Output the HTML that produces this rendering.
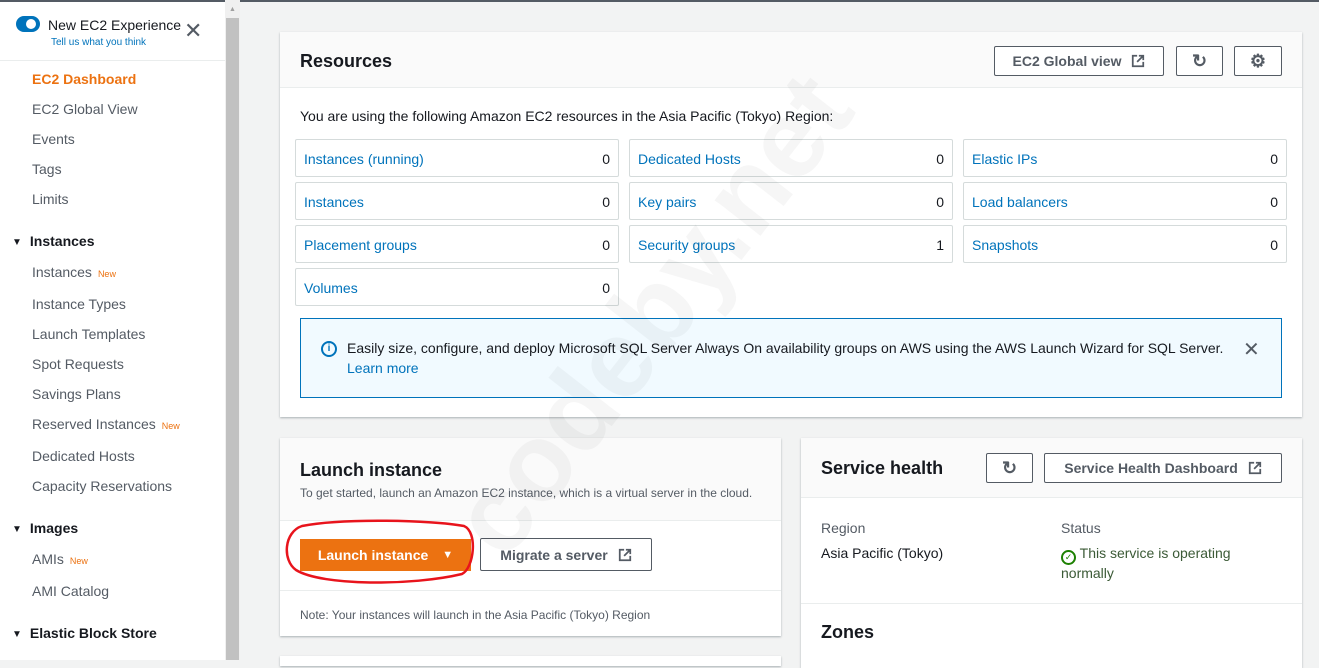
<!DOCTYPE html><html><head><style>
*{box-sizing:border-box;margin:0;padding:0}
body{width:1319px;height:660px;overflow:hidden;background:#f2f3f3;font-family:"Liberation Sans",sans-serif;color:#16191f;position:relative;font-size:14px}
.a{position:absolute}
.side{left:0;top:0;width:225px;height:660px;background:#fff;border-top:2px solid #545b64}
.sb{left:225px;top:0;width:15px;height:660px;background:#f0f0f0}
.nav{position:absolute;left:32px;color:#545b64;font-size:14px}
.grp{position:absolute;left:12px;font-weight:bold;font-size:14px;color:#16191f}
.grp:before{content:"▼";font-size:10px;margin-right:8px;position:relative;top:-1px}
.new{color:#ec7211;font-size:9px;margin-left:6px}
.card{background:#fff;box-shadow:0 1px 2px rgba(0,28,36,.3)}
.btn{position:absolute;border:1px solid #545b64;background:#fff;font-weight:bold;color:#545b64;font-size:14px;display:flex;align-items:center;justify-content:center;gap:10px;border-radius:2px}
.cell{position:absolute;width:324px;height:38px;border:1px solid #d5dbdb;border-radius:2px;color:#0073bb;padding:11px 8px;font-size:14px}
.cell span{position:absolute;right:8px;color:#16191f}
</style></head><body>
<svg width="0" height="0" style="position:absolute"><defs><symbol id="ext" viewBox="0 0 16 16"><path d="M7 2H2v12h12V9M9 2h5v5M14 2L7 9" fill="none" stroke="currentColor" stroke-width="2"/></symbol></defs></svg>
<div class="a" style="left:0;top:0;width:1319px;height:2px;background:#545b64"></div>
<div class="a side">
 <div class="a" style="left:16px;top:14px;width:24px;height:16px;border-radius:8px;background:#0073bb"><div class="a" style="left:10px;top:3px;width:10px;height:10px;border-radius:5px;background:#fff"></div></div>
 <div class="a" style="left:48px;top:15px;font-size:14px">New EC2 Experience</div>
 <div class="a" style="left:51px;top:35px;font-size:10px;color:#0073bb">Tell us what you think</div>
 <div class="a" style="left:184px;top:16px;font-size:22px;color:#545b64">✕</div>
 <div class="a" style="left:0;top:58px;width:225px;height:1px;background:#eaeded"></div>
 <div class="nav" style="top:69px;color:#ec7211;font-weight:bold">EC2 Dashboard</div>
 <div class="nav" style="top:99px">EC2 Global View</div>
 <div class="nav" style="top:129px">Events</div>
 <div class="nav" style="top:159px">Tags</div>
 <div class="nav" style="top:189px">Limits</div>
 <div class="grp" style="top:231px">Instances</div>
 <div class="nav" style="top:262px">Instances<span class="new">New</span></div>
 <div class="nav" style="top:294px">Instance Types</div>
 <div class="nav" style="top:324px">Launch Templates</div>
 <div class="nav" style="top:354px">Spot Requests</div>
 <div class="nav" style="top:384px">Savings Plans</div>
 <div class="nav" style="top:414px">Reserved Instances<span class="new">New</span></div>
 <div class="nav" style="top:446px">Dedicated Hosts</div>
 <div class="nav" style="top:476px">Capacity Reservations</div>
 <div class="grp" style="top:518px">Images</div>
 <div class="nav" style="top:549px">AMIs<span class="new">New</span></div>
 <div class="nav" style="top:581px">AMI Catalog</div>
 <div class="grp" style="top:623px">Elastic Block Store</div>
</div>
<div class="a sb"><div class="a" style="left:1px;top:18px;width:13px;height:642px;background:#c1c1c1"></div><div class="a" style="left:4px;top:6px;font-size:7px;color:#a0a0a0">▲</div></div>

<div class="a card" style="left:280px;top:32px;width:1022px;height:385px">
 <div class="a" style="left:0;top:0;width:1022px;height:56px;background:#fafafa;border-bottom:1px solid #eaeded"></div>
 <div class="a" style="left:20px;top:19px;font-size:18px;font-weight:bold">Resources</div>
 <div class="btn" style="left:714px;top:14px;width:170px;height:30px">EC2 Global view <svg width="14" height="14"><use href="#ext"/></svg></div>
 <div class="btn" style="left:896px;top:14px;width:47px;height:30px;font-size:18px">↻</div>
 <div class="btn" style="left:954px;top:14px;width:48px;height:30px;font-size:18px">⚙</div>
 <div class="a" style="left:20px;top:76px">You are using the following Amazon EC2 resources in the Asia Pacific (Tokyo) Region:</div>
 <div class="cell" style="left:15px;top:107px">Instances (running)<span>0</span></div>
 <div class="cell" style="left:349px;top:107px">Dedicated Hosts<span>0</span></div>
 <div class="cell" style="left:683px;top:107px">Elastic IPs<span>0</span></div>
 <div class="cell" style="left:15px;top:150px">Instances<span>0</span></div>
 <div class="cell" style="left:349px;top:150px">Key pairs<span>0</span></div>
 <div class="cell" style="left:683px;top:150px">Load balancers<span>0</span></div>
 <div class="cell" style="left:15px;top:193px">Placement groups<span>0</span></div>
 <div class="cell" style="left:349px;top:193px">Security groups<span>1</span></div>
 <div class="cell" style="left:683px;top:193px">Snapshots<span>0</span></div>
 <div class="cell" style="left:15px;top:236px">Volumes<span>0</span></div>
 <div class="a" style="left:20px;top:286px;width:982px;height:80px;background:#f1faff;border:1px solid #0073bb">
  <div class="a" style="left:20px;top:22px;width:16px;height:16px;border:2px solid #0073bb;border-radius:50%;color:#0073bb;font-size:10px;font-weight:bold;text-align:center;line-height:12px">i</div>
  <div class="a" style="left:46px;top:21px">Easily size, configure, and deploy Microsoft SQL Server Always On availability groups on AWS using the AWS Launch Wizard for SQL Server.</div>
  <div class="a" style="left:46px;top:41px;color:#0073bb">Learn more</div>
  <div class="a" style="left:942px;top:18px;font-size:20px;color:#545b64">✕</div>
 </div>
</div>

<div class="a card" style="left:280px;top:438px;width:501px;height:198px">
 <div class="a" style="left:0;top:0;width:501px;height:83px;background:#fafafa;border-bottom:1px solid #eaeded"></div>
 <div class="a" style="left:20px;top:22px;font-size:18px;font-weight:bold">Launch instance</div>
 <div class="a" style="left:20px;top:48px;font-size:12px;color:#545b64">To get started, launch an Amazon EC2 instance, which is a virtual server in the cloud.</div>
 <div class="a" style="left:20px;top:101px;width:171px;height:32px;background:#ec7211;color:#fff;font-weight:bold;display:flex;align-items:center;justify-content:center;gap:14px">Launch instance <span style="font-size:11px">▼</span></div>
 <div class="btn" style="left:200px;top:100px;width:172px;height:33px">Migrate a server <svg width="14" height="14"><use href="#ext"/></svg></div>
 <div class="a" style="left:0;top:152px;width:501px;height:1px;background:#eaeded"></div>
 <div class="a" style="left:20px;top:170px;font-size:12px;color:#545b64">Note: Your instances will launch in the Asia Pacific (Tokyo) Region</div>
</div>
<div class="a card" style="left:280px;top:656px;width:501px;height:10px"></div>
<svg class="a" style="left:282px;top:518px" width="196" height="80"><path d="M20 8 C60 0 150 2 182 8 C196 14 192 50 180 56 C130 68 40 68 14 52 C0 42 2 14 20 8 Z" fill="none" stroke="#e8141c" stroke-width="2.5"/></svg>

<div class="a card" style="left:801px;top:438px;width:501px;height:230px">
 <div class="a" style="left:0;top:0;width:501px;height:60px;background:#fafafa;border-bottom:1px solid #eaeded"></div>
 <div class="a" style="left:20px;top:20px;font-size:18px;font-weight:bold">Service health</div>
 <div class="btn" style="left:185px;top:15px;width:47px;height:30px;font-size:18px">↻</div>
 <div class="btn" style="left:243px;top:15px;width:238px;height:30px">Service Health Dashboard <svg width="14" height="14"><use href="#ext"/></svg></div>
 <div class="a" style="left:20px;top:82px;color:#545b64">Region</div>
 <div class="a" style="left:20px;top:107px">Asia Pacific (Tokyo)</div>
 <div class="a" style="left:260px;top:82px;color:#545b64">Status</div>
 <div class="a" style="left:260px;top:107px;color:#1d8102"><span style="display:inline-block;width:15px;height:15px;border:2px solid #1d8102;border-radius:50%;font-size:9px;text-align:center;line-height:11px;vertical-align:-2px">✓</span> <span style="color:#3b5a36">This service is operating</span></div>
 <div class="a" style="left:260px;top:127px;color:#3b5a36">normally</div>
 <div class="a" style="left:0;top:165px;width:501px;height:1px;background:#eaeded"></div>
 <div class="a" style="left:20px;top:184px;font-size:18px;font-weight:bold">Zones</div>
</div>
<div class="a" style="left:360px;font-size:110px;font-weight:bold;color:rgba(0,0,0,0.035);transform:rotate(-52deg);transform-origin:center;white-space:nowrap;width:600px;top:240px">codeby.net</div>
</body></html>
